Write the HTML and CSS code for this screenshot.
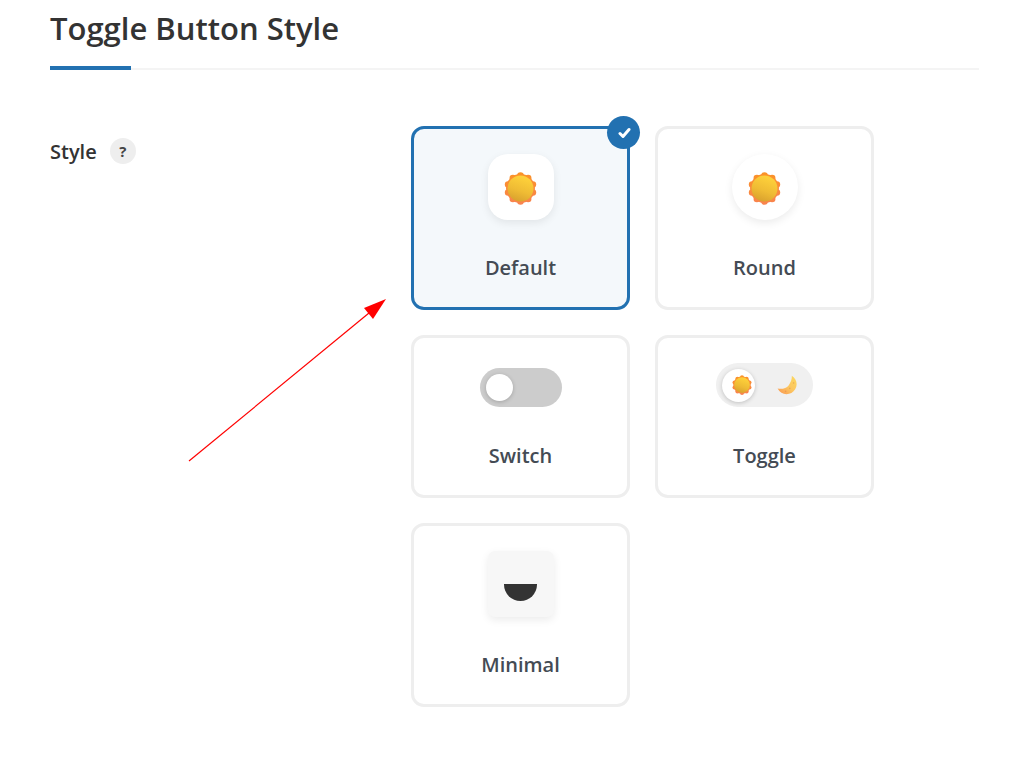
FILE: index.html
```html
<!DOCTYPE html>
<html lang="en">
<head>
    <meta charset="UTF-8">
    <meta name="viewport" content="width=device-width, initial-scale=1.0">
    <title>Toggle Button Style</title>
    <link rel="stylesheet" href="styles.css">
</head>
<body>
    <!-- Shared icons -->
    <svg class="sprite" aria-hidden="true">
        <defs>
            <linearGradient id="sun-rays" gradientUnits="userSpaceOnUse" x1="16" y1="0" x2="16" y2="32">
                <stop offset="0" stop-color="#fb9326"/>
                <stop offset="1" stop-color="#f98350"/>
            </linearGradient>
            <linearGradient id="sun-disc" x1="0.7" y1="0" x2="0.35" y2="1">
                <stop offset="0.1" stop-color="#fdd03a"/>
                <stop offset="0.6" stop-color="#efbb34"/>
                <stop offset="1" stop-color="#d9a12e"/>
            </linearGradient>
            <linearGradient id="moon-fill" x1="1" y1="0" x2="0.2" y2="1">
                <stop offset="0" stop-color="#fbd95f"/>
                <stop offset="0.6" stop-color="#fcc560"/>
                <stop offset="1" stop-color="#fa9f55"/>
            </linearGradient>
        </defs>
        <symbol id="sun" viewBox="0 0 32 32">
            <g fill="url(#sun-rays)">
                <circle cx="16" cy="16" r="14"/>
                <circle cx="16" cy="3.4" r="3.2"/>
                <circle cx="23.4" cy="5.8" r="3.2"/>
                <circle cx="28" cy="12.1" r="3.2"/>
                <circle cx="28" cy="19.9" r="3.2"/>
                <circle cx="23.4" cy="26.2" r="3.2"/>
                <circle cx="16" cy="28.6" r="3.2"/>
                <circle cx="8.6" cy="26.2" r="3.2"/>
                <circle cx="4" cy="19.9" r="3.2"/>
                <circle cx="4" cy="12.1" r="3.2"/>
                <circle cx="8.6" cy="5.8" r="3.2"/>
            </g>
            <circle cx="16" cy="16" r="12.6" fill="url(#sun-disc)"/>
        </symbol>
        <symbol id="moon" viewBox="0 0 20 20">
            <path fill="url(#moon-fill)" d="M14.8.8C19.6 4 21 9.6 18.2 14.2C14.6 20.4 4.6 21.4.6 13.6C5 14.4 9.4 13.4 11.6 10.4C14 7.200 15 4 14.8.8Z"/>
            <circle cx="16.6" cy="8" r="0.8" fill="#eda850"/>
            <circle cx="12.8" cy="13.4" r="0.8" fill="#eda850"/>
            <circle cx="8.6" cy="16.4" r="0.8" fill="#ee9a50"/>
        </symbol>
    </svg>

    <main class="settings">
        <h1 class="section-title">Toggle Button Style</h1>

        <form class="field">
            <div class="field-title">
                <span id="style-label">Style</span>
                <button type="button" class="help" aria-label="Help">?</button>
            </div>

            <div class="options" role="radiogroup" aria-labelledby="style-label">
                <label class="option">
                    <input type="radio" name="style" value="default" checked>
                    <span class="preview preview-default"><svg class="sun"><use href="#sun"/></svg></span>
                    <span class="option-name">Default</span>
                    <span class="check">
                        <svg viewBox="0 0 14 14"><path d="M3 7.5L6 10.5L12 3.5"/></svg>
                    </span>
                </label>

                <label class="option">
                    <input type="radio" name="style" value="round">
                    <span class="preview preview-round"><svg class="sun"><use href="#sun"/></svg></span>
                    <span class="option-name">Round</span>
                </label>

                <label class="option">
                    <input type="radio" name="style" value="switch">
                    <span class="preview-switch"><span class="knob"></span></span>
                    <span class="option-name">Switch</span>
                </label>

                <label class="option">
                    <input type="radio" name="style" value="toggle">
                    <span class="preview-toggle">
                        <span class="knob"><svg class="icon-small"><use href="#sun"/></svg></span>
                        <svg class="icon-small"><use href="#moon"/></svg>
                    </span>
                    <span class="option-name">Toggle</span>
                </label>

                <label class="option">
                    <input type="radio" name="style" value="minimal">
                    <span class="preview preview-minimal"><span class="half"></span></span>
                    <span class="option-name">Minimal</span>
                </label>
            </div>

            <!-- Arrow pointing at the selected style -->
            <svg class="arrow" viewBox="0 0 198 163" aria-hidden="true">
                <path d="M1 162L181 14" stroke="#ff0000" stroke-width="1.2"/>
                <path d="M198 0L176 9L185 20Z" fill="#ff0000"/>
            </svg>
        </form>
    </main>
</body>
</html>
```
FILE: styles.css
```css
* {
    box-sizing: border-box;
}
body {
    margin: 0;
    background: #fff;
    color: #333;
    font-family: "Open Sans", "Noto Sans", sans-serif;
    font-weight: 600;
}
.sprite {
    position: absolute;
    width: 0;
    height: 0;
}
.settings {
    padding: 7px 45px 48px 50px;
}
.section-title {
    margin: 0;
    padding-bottom: 19px;
    border-bottom: 2px solid #f4f4f4;
    font-size: 31px;
    line-height: 42px;
    font-weight: 600;
    position: relative;
}
.section-title::after {
    content: "";
    position: absolute;
    left: 0;
    bottom: -2px;
    width: 81px;
    height: 4px;
    background: #2271b1;
}
.field {
    position: relative;
    display: grid;
    grid-template-columns: 361px minmax(0, 463px);
    padding-top: 56px;
}
.field-title {
    display: flex;
    align-items: center;
    gap: 13px;
    height: 28px;
    margin-top: 11px;
    font-size: 20px;
}
.help {
    width: 26px;
    height: 26px;
    padding: 0;
    border: none;
    border-radius: 50%;
    background: #eee;
    color: #444;
    font: inherit;
    font-size: 15px;
    font-weight: 700;
    line-height: 26px;
    cursor: pointer;
}
.options {
    display: grid;
    grid-template-columns: 1fr 1fr;
    gap: 25px;
}
.option {
    position: relative;
    display: flex;
    flex-direction: column;
    align-items: center;
    justify-content: flex-end;
    gap: 34px;
    padding: 25px;
    border: 3px solid #eee;
    border-radius: 13px;
    color: #444b54;
    cursor: pointer;
}
.option:has(input:checked) {
    border-color: #2271b1;
    background: #f4f8fb;
}
.option input {
    position: absolute;
    opacity: 0;
    margin: 0;
}
.option-name {
    font-size: 20px;
    line-height: 28px;
}
.check {
    position: absolute;
    top: -13px;
    right: -13px;
    display: flex;
    align-items: center;
    justify-content: center;
    width: 33px;
    height: 33px;
    border-radius: 50%;
    background: #2271b1;
}
.check svg {
    width: 14px;
    height: 14px;
    fill: none;
    stroke: #fff;
    stroke-width: 3;
    stroke-linecap: round;
    stroke-linejoin: round;
}
.preview {
    display: flex;
    align-items: center;
    justify-content: center;
    width: 66px;
    height: 66px;
    background: #fff;
    box-shadow: 0 3px 8px rgba(0, 0, 0, 0.08);
}
.preview-default {
    border-radius: 20px;
}
.preview-round {
    border-radius: 50%;
}
.preview-minimal {
    border-radius: 7px;
    background: #f7f7f7;
}
.sun {
    width: 33px;
    height: 33px;
    margin-top: 3px;
}
.half {
    width: 33px;
    height: 17px;
    margin-top: 17px;
    border-radius: 0 0 17px 17px;
    background: #333;
}
.preview-switch,
.preview-toggle {
    display: flex;
    align-items: center;
    margin-bottom: 1px;
}
.preview-switch {
    width: 82px;
    height: 39px;
    padding: 6px;
    border-radius: 20px;
    background: #ccc;
}
.knob {
    display: flex;
    align-items: center;
    justify-content: center;
    width: 27px;
    height: 27px;
    border-radius: 50%;
    background: #fff;
    box-shadow: 0 1px 4px rgba(0, 0, 0, 0.2);
}
.preview-toggle {
    justify-content: space-between;
    width: 97px;
    height: 44px;
    padding: 0 16px 0 6px;
    border-radius: 22px;
    background: #f0f0f0;
}
.preview-toggle .knob {
    width: 33px;
    height: 33px;
    padding-left: 7px;
}
.icon-small {
    width: 20px;
    height: 20px;
    flex: none;
}
.arrow {
    position: absolute;
    top: 229px;
    left: 138px;
    width: 198px;
    height: 163px;
    pointer-events: none;
}
```
